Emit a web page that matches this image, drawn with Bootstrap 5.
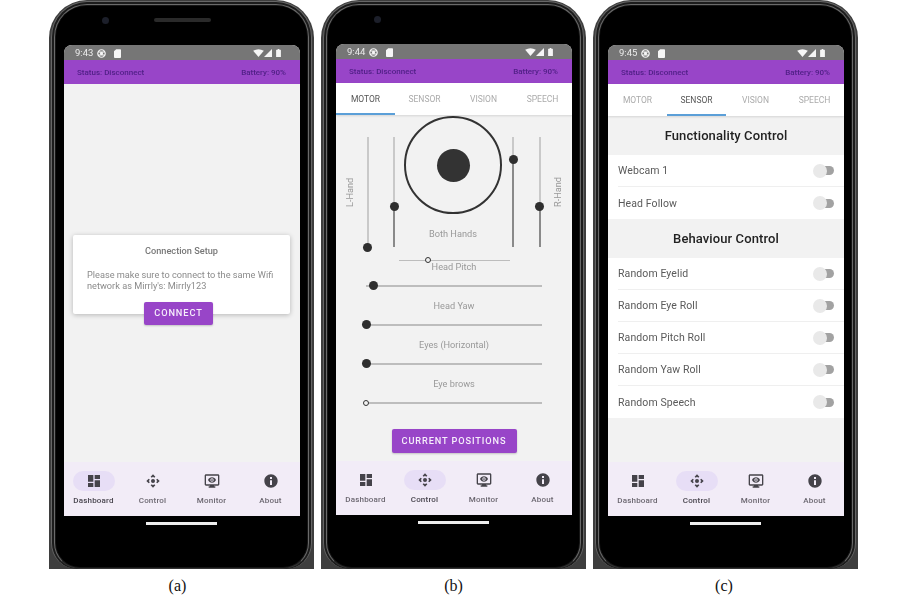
<!DOCTYPE html>
<html lang="en">
<head>
<meta charset="utf-8">
<title>Mirrly app screens</title>
<link href="https://cdn.jsdelivr.net/npm/bootstrap@5.3.0/dist/css/bootstrap.min.css" rel="stylesheet">
<style>
html,body{width:900px;height:600px;overflow:hidden;background:#fff;margin:0}
body{font-family:Roboto,"Liberation Sans",sans-serif;padding-left:49px;gap:7px}
.fig{width:265px}
.shell{height:569px;background:#3e3e3e;border-radius:38px 38px 0 0;padding:1px 2px 0;filter:blur(.35px)}
.shell-b{height:100%;background:#1c1c1c;border:1px solid #666;border-bottom:0;border-radius:36px 36px 26px 26px;padding:2px 2px 0}
.shell-c{height:100%;background:#161616;border:1px solid #6a6a6a;border-bottom-color:#333;border-radius:33px 33px 26px 26px;padding:1px}
.bezel{height:100%;background:#000;border-radius:30px 30px 24px 24px;padding:39px 6px 0 8px;margin:0 0}
.up1 .bezel{padding-top:38px}
.top-hw{height:0;overflow:visible}
.cam{width:7px;height:7px;border-radius:50%;background:#1c1f2a;margin:-28px 0 0 38px}
.spk{width:57px;height:4px;border-radius:2px;background:#2a2a2a;margin:-27.5px 0 0 45px}
.screen{width:236px;height:471px;border-radius:8px 8px 0 0;background:#f2f2f2;overflow:hidden}
.sbar{height:15px;background:#767676;color:#ececec;font-size:9.500px;padding:1px 19px 0 11px;flex:none}
.sbar svg{display:block;fill:#f6f6f6}
.clock{width:22px}
.appbar{height:24px;background:#9845c8;color:#4f1f85;font-size:8px;font-weight:500;padding:1.500px 14px 0 13px;flex:none}
.body-area{flex:1 1 auto;min-height:0}
.tabrow{height:32px;background:#fff;flex:none;box-shadow:0 1px 2px rgba(0,0,0,.12);position:relative}
.tabitem{flex:1 1 0;font-size:8.500px;color:#aaa;border-bottom:2px solid transparent;padding-top:2px}
.tabitem.on{color:#555;border-bottom-color:#5b9fd8}
.botnav{height:54.5px;background:#f2ecf7;flex:none;padding-top:9.500px}
.navitem{flex:1 1 0;font-size:8px;font-weight:500;color:#6b6770;letter-spacing:.2px}
.navitem.on{color:#48454e}
.pill{width:42px;height:20px;border-radius:10px;margin-bottom:4.500px}
.navitem.on .pill{background:#e7def6}
.pill svg{width:16px;height:16px;fill:#45434a}
.navtxt{line-height:10px}
.homebar{width:71px;height:2.5px;background:#eee;margin:6px auto 0 82px}
.cap{font-family:"Liberation Serif",serif;font-size:16px;color:#111;line-height:16px;margin-top:9px}
.cap-a{padding-right:8px}
.cap-c{padding-right:3px}
/* dialog */
.dlg-wrap{padding-top:150.500px;padding-left:9px}
.dlg{width:217px;height:79px;background:#fff;border-radius:2px;box-shadow:0 1px 5px rgba(0,0,0,.25);padding:10px 14px 0}
.dlg-t{font-size:9.200px;font-weight:500;color:#777;line-height:11px}
.dlg-p{font-size:9.200px;color:#8b8b8b;line-height:11px;margin-top:13px}
.pbtn{background:#9845c8;color:#f6eefb;font-weight:500;font-size:9.200px;letter-spacing:.9px;border-radius:2px;height:23px;border:0;padding:0;box-shadow:0 1px 2px rgba(0,0,0,.2)}
.btn-conn{width:69px;margin:-12px 0 0 71px;position:relative}
.btn-cur{width:125px;height:24px;margin-top:25px}
/* motor */
.vs{width:8px;height:110px;margin-top:22px;position:relative;flex:none}
.vs::before{content:"";position:absolute;left:3px;top:0;bottom:0;width:2px;background:#c9c9c9}
.vfill{position:absolute;left:3px;bottom:0;width:2px;background:#8a8a8a}
.dot{position:absolute;width:9px;height:9px;border-radius:50%;background:#2f2f2f}
.vs .dot{left:-.5px;margin-bottom:-4.500px}
.ml-a{margin-left:18.5px}
.hand{writing-mode:vertical-rl;transform:rotate(180deg);font-size:9.200px;color:#999;width:10px;height:30px;text-align:center;line-height:10px;flex:none}
.hand-l{margin:62px 8.5px 0 9px}
.hand-r{margin:62px 0 0 9.5px}
.joycol{width:98px;margin:0 7px 0 6px;flex:none}
.joy{width:98px;height:98px;border:2px solid #333;border-radius:50%;margin-top:1px}
.knob{width:33px;height:33px;background:#333;border-radius:50%}
.lbl{font-size:9.200px;color:#999;line-height:12px;text-align:center}
.lbl-both{margin-top:14px}
.toprow{height:132px}
.hs{position:relative;height:1.5px;background:#bdbdbd;margin-left:auto;margin-right:auto}
.hs .dot{top:-3.75px;margin-left:-4.500px}
.hs .ring{width:6px;height:6px;background:#f2f2f2;border:1.5px solid #333;top:-2.25px;margin-left:-3px}
.hs-both{width:111px;margin-top:12.5px}
.hs-w{width:176px;margin-top:12.500px}
.lbl-s{margin-top:13px}
.lbl-first{margin-top:-.5px}
/* sensors */
.sect{height:39px;font-size:13px;font-weight:500;color:#222;letter-spacing:.1px}
.rowlist{background:#fff}
.srow{height:32px;margin-left:10px;padding-right:10px;font-size:10.500px;color:#5a5a5a;letter-spacing:.1px;border-bottom:1px solid #efefef}
.srow:last-child{border-bottom:0}
.srow-t{padding-top:1px}
.tog{width:21px;height:14px;position:relative}
.tog::before{content:"";position:absolute;right:0;top:2.500px;width:15px;height:9px;border-radius:4.500px;background:#a2a2a2}
.tog::after{content:"";position:absolute;left:0;top:0;width:14px;height:14px;border-radius:50%;background:#e9e9e9}
</style>
</head>
<body class="d-flex align-items-start">
<svg width="0" height="0" class="position-absolute">
<symbol id="i-dash" viewBox="0 0 24 24"><path d="M3 13h8V3H3v10zm0 8h8v-6H3v6zm10 0h8V11h-8v10zm0-18v6h8V3h-8z"/></symbol>
<symbol id="i-ctrl" viewBox="0 0 24 24"><path d="M15.54 5.54L13.77 7.3 12 5.54 10.23 7.3 8.46 5.54 12 2zm2.92 10l-1.76-1.77L18.46 12l-1.76-1.77 1.76-1.77L22 12zm-10 2.92l1.77-1.76L12 18.46l1.77-1.76 1.77 1.76L12 22zm-2.92-10l1.76 1.77L5.54 12l1.76 1.77-1.76 1.77L2 12z"/><circle cx="12" cy="12" r="3"/></symbol>
<symbol id="i-mon" viewBox="0 0 24 24"><path fill-rule="evenodd" d="M21 2H3c-1.1 0-2 .9-2 2v13c0 1.1.9 2 2 2h6v1H7v2h10v-2h-2v-1h6c1.1 0 2-.9 2-2V4c0-1.100-.9-2-2-2zm0 15H3V4h18v13zM12 6.500c-2.700 0-5 1.700-6 4 1 2.300 3.300 4 6 4s5-1.700 6-4c-1-2.300-3.300-4-6-4zm0 6.500a2.500 2.500 0 1 1 0-5 2.500 2.500 0 0 1 0 5z"/><circle cx="12" cy="10.500" r="1.300"/></symbol>
<symbol id="i-info" viewBox="0 0 24 24"><path d="M12 2C6.480 2 2 6.480 2 12s4.480 10 10 10 10-4.480 10-10S17.520 2 12 2zm1.500 16h-3v-7h3v7zm0-9h-3V6h3v3z"/></symbol>
<symbol id="i-net" viewBox="0 0 10 10"><path fill-rule="evenodd" d="M5 .2a4.800 4.800 0 1 0 0 9.600A4.800 4.800 0 0 0 5 .2zm0 1.300a3.500 3.500 0 0 1 2.800 1.400H2.200A3.500 3.500 0 0 1 5 1.500zM1.500 5c0-.4.100-.8.200-1.100h2a1.800 1.800 0 0 0 0 2.200h-2c-.1-.3-.2-.7-.2-1.100zM5 8.500a3.500 3.500 0 0 1-2.800-1.400h5.600A3.500 3.500 0 0 1 5 8.500zm1.300-2.400a1.800 1.800 0 0 0 0-2.200h2a3.500 3.500 0 0 1 0 2.200z"/></symbol>
<symbol id="i-sd" viewBox="0 0 8 10"><path d="M2.500 0H7a1 1 0 0 1 1 1v8a1 1 0 0 1-1 1H1a1 1 0 0 1-1-1V2.500z"/></symbol>
<symbol id="i-wifi" viewBox="0 0 12 9"><path d="M0 2Q6-1.500 12 2L6 9z"/></symbol>
<symbol id="i-cell" viewBox="0 0 8 8"><path d="M8 0v8H0z"/></symbol>
<symbol id="i-bat" viewBox="0 0 6 10"><path d="M2 0h2v1h1.500a.5.500 0 0 1 .5.500V10H0V1.500A.5.500 0 0 1 .5 1H2z"/></symbol>
</svg>

<!-- (a) -->
<figure class="fig m-0">
<div class="shell"><div class="shell-b"><div class="shell-c"><div class="bezel">
 <div class="top-hw d-flex"><div class="cam flex-none"></div><div class="spk flex-none"></div></div>
 <div class="screen d-flex flex-column">
  <div class="sbar d-flex align-items-center"><span class="clock">9:43</span><svg width="9" height="9" class="me-2"><use href="#i-net"/></svg><svg width="7" height="9"><use href="#i-sd"/></svg>
   <span class="ms-auto d-flex align-items-center"><svg width="11" height="8"><use href="#i-wifi"/></svg><svg width="8" height="8"><use href="#i-cell"/></svg><svg width="5" height="8" class="ms-1"><use href="#i-bat"/></svg></span></div>
  <div class="appbar d-flex align-items-center justify-content-between"><span>Status: Disconnect</span><span>Battery: 90%</span></div>
  <div class="body-area dlg-wrap">
   <div class="dlg"><div class="dlg-t text-center">Connection Setup</div><div class="dlg-p">Please make sure to connect to the same Wifi network as Mirrly's: Mirrly123</div></div>
   <button class="pbtn btn-conn d-block">CONNECT</button>
  </div>
  <div class="botnav d-flex">
   <div class="navitem on d-flex flex-column align-items-center"><div class="pill d-flex align-items-center justify-content-center"><svg><use href="#i-dash"/></svg></div><span class="navtxt">Dashboard</span></div>
   <div class="navitem d-flex flex-column align-items-center"><div class="pill d-flex align-items-center justify-content-center"><svg><use href="#i-ctrl"/></svg></div><span class="navtxt">Control</span></div>
   <div class="navitem d-flex flex-column align-items-center"><div class="pill d-flex align-items-center justify-content-center"><svg><use href="#i-mon"/></svg></div><span class="navtxt">Monitor</span></div>
   <div class="navitem d-flex flex-column align-items-center"><div class="pill d-flex align-items-center justify-content-center"><svg><use href="#i-info"/></svg></div><span class="navtxt">About</span></div>
  </div>
 </div>
 <div class="homebar"></div>
</div></div></div></div>
<figcaption class="cap cap-a text-center">(a)</figcaption>
</figure>

<!-- (b) -->
<figure class="fig m-0 up1">
<div class="shell"><div class="shell-b"><div class="shell-c"><div class="bezel">
 <div class="top-hw d-flex"><div class="cam flex-none"></div></div>
 <div class="screen d-flex flex-column">
  <div class="sbar d-flex align-items-center"><span class="clock">9:44</span><svg width="9" height="9" class="me-2"><use href="#i-net"/></svg><svg width="7" height="9"><use href="#i-sd"/></svg>
   <span class="ms-auto d-flex align-items-center"><svg width="11" height="8"><use href="#i-wifi"/></svg><svg width="8" height="8"><use href="#i-cell"/></svg><svg width="5" height="8" class="ms-1"><use href="#i-bat"/></svg></span></div>
  <div class="appbar d-flex align-items-center justify-content-between"><span>Status: Disconnect</span><span>Battery: 90%</span></div>
  <div class="tabrow d-flex">
   <div class="tabitem on d-flex align-items-center justify-content-center">MOTOR</div>
   <div class="tabitem d-flex align-items-center justify-content-center">SENSOR</div>
   <div class="tabitem d-flex align-items-center justify-content-center">VISION</div>
   <div class="tabitem d-flex align-items-center justify-content-center">SPEECH</div>
  </div>
  <div class="body-area">
   <div class="toprow d-flex align-items-start">
    <div class="hand hand-l">L-Hand</div>
    <div class="vs"><div class="dot" style="bottom:0"></div></div>
    <div class="vs ml-a"><div class="vfill" style="height:41px"></div><div class="dot" style="bottom:41px"></div></div>
    <div class="joycol">
     <div class="joy d-flex align-items-center justify-content-center"><div class="knob"></div></div>
     <div class="lbl lbl-both">Both Hands</div>
    </div>
    <div class="vs"><div class="vfill" style="height:88px"></div><div class="dot" style="bottom:88px"></div></div>
    <div class="vs ml-a"><div class="vfill" style="height:41px"></div><div class="dot" style="bottom:41px"></div></div>
    <div class="hand hand-r">R-Hand</div>
   </div>
   <div class="hs hs-both"><div class="dot ring" style="left:27%"></div></div>
   <div class="lbl lbl-first">Head Pitch</div>
   <div class="hs hs-w"><div class="dot" style="left:4.300%"></div></div>
   <div class="lbl lbl-s">Head Yaw</div>
   <div class="hs hs-w"><div class="dot" style="left:0"></div></div>
   <div class="lbl lbl-s">Eyes (Horizontal)</div>
   <div class="hs hs-w"><div class="dot" style="left:0"></div></div>
   <div class="lbl lbl-s">Eye brows</div>
   <div class="hs hs-w"><div class="dot ring" style="left:0"></div></div>
   <div class="text-center"><button class="pbtn btn-cur">CURRENT POSITIONS</button></div>
  </div>
  <div class="botnav d-flex">
   <div class="navitem d-flex flex-column align-items-center"><div class="pill d-flex align-items-center justify-content-center"><svg><use href="#i-dash"/></svg></div><span class="navtxt">Dashboard</span></div>
   <div class="navitem on d-flex flex-column align-items-center"><div class="pill d-flex align-items-center justify-content-center"><svg><use href="#i-ctrl"/></svg></div><span class="navtxt">Control</span></div>
   <div class="navitem d-flex flex-column align-items-center"><div class="pill d-flex align-items-center justify-content-center"><svg><use href="#i-mon"/></svg></div><span class="navtxt">Monitor</span></div>
   <div class="navitem d-flex flex-column align-items-center"><div class="pill d-flex align-items-center justify-content-center"><svg><use href="#i-info"/></svg></div><span class="navtxt">About</span></div>
  </div>
 </div>
 <div class="homebar"></div>
</div></div></div></div>
<figcaption class="cap text-center">(b)</figcaption>
</figure>

<!-- (c) -->
<figure class="fig m-0">
<div class="shell"><div class="shell-b"><div class="shell-c"><div class="bezel">
 <div class="screen d-flex flex-column">
  <div class="sbar d-flex align-items-center"><span class="clock">9:45</span><svg width="9" height="9" class="me-2"><use href="#i-net"/></svg><svg width="7" height="9"><use href="#i-sd"/></svg>
   <span class="ms-auto d-flex align-items-center"><svg width="11" height="8"><use href="#i-wifi"/></svg><svg width="8" height="8"><use href="#i-cell"/></svg><svg width="5" height="8" class="ms-1"><use href="#i-bat"/></svg></span></div>
  <div class="appbar d-flex align-items-center justify-content-between"><span>Status: Disconnect</span><span>Battery: 90%</span></div>
  <div class="tabrow d-flex">
   <div class="tabitem d-flex align-items-center justify-content-center">MOTOR</div>
   <div class="tabitem on d-flex align-items-center justify-content-center">SENSOR</div>
   <div class="tabitem d-flex align-items-center justify-content-center">VISION</div>
   <div class="tabitem d-flex align-items-center justify-content-center">SPEECH</div>
  </div>
  <div class="body-area">
   <div class="sect d-flex align-items-center justify-content-center">Functionality Control</div>
   <div class="rowlist">
    <div class="srow d-flex align-items-center justify-content-between"><span class="srow-t">Webcam 1</span><span class="tog"></span></div>
    <div class="srow d-flex align-items-center justify-content-between"><span class="srow-t">Head Follow</span><span class="tog"></span></div>
   </div>
   <div class="sect d-flex align-items-center justify-content-center">Behaviour Control</div>
   <div class="rowlist">
    <div class="srow d-flex align-items-center justify-content-between"><span class="srow-t">Random Eyelid</span><span class="tog"></span></div>
    <div class="srow d-flex align-items-center justify-content-between"><span class="srow-t">Random Eye Roll</span><span class="tog"></span></div>
    <div class="srow d-flex align-items-center justify-content-between"><span class="srow-t">Random Pitch Roll</span><span class="tog"></span></div>
    <div class="srow d-flex align-items-center justify-content-between"><span class="srow-t">Random Yaw Roll</span><span class="tog"></span></div>
    <div class="srow d-flex align-items-center justify-content-between"><span class="srow-t">Random Speech</span><span class="tog"></span></div>
   </div>
  </div>
  <div class="botnav d-flex">
   <div class="navitem d-flex flex-column align-items-center"><div class="pill d-flex align-items-center justify-content-center"><svg><use href="#i-dash"/></svg></div><span class="navtxt">Dashboard</span></div>
   <div class="navitem on d-flex flex-column align-items-center"><div class="pill d-flex align-items-center justify-content-center"><svg><use href="#i-ctrl"/></svg></div><span class="navtxt">Control</span></div>
   <div class="navitem d-flex flex-column align-items-center"><div class="pill d-flex align-items-center justify-content-center"><svg><use href="#i-mon"/></svg></div><span class="navtxt">Monitor</span></div>
   <div class="navitem d-flex flex-column align-items-center"><div class="pill d-flex align-items-center justify-content-center"><svg><use href="#i-info"/></svg></div><span class="navtxt">About</span></div>
  </div>
 </div>
 <div class="homebar"></div>
</div></div></div></div>
<figcaption class="cap cap-c text-center">(c)</figcaption>
</figure>
<script src="https://cdn.jsdelivr.net/npm/bootstrap@5.3.0/dist/js/bootstrap.bundle.min.js"></script>
</body>
</html>
